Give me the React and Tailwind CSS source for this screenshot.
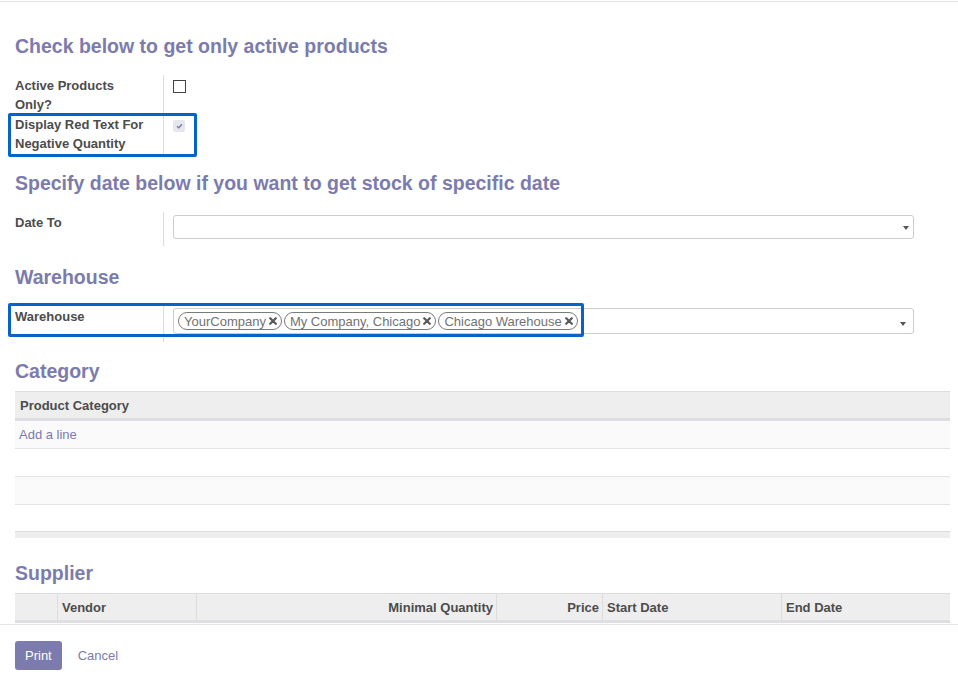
import React from "react";

function Caret({ className }) {
  return (
    <span
      className={
        "absolute w-0 h-0 border-x-[3px] border-t-[4px] border-x-transparent border-t-[#555] " +
        className
      }
    />
  );
}

function Tag({ label }) {
  return (
    <span className="inline-flex items-center h-[18px] pl-[5px] pr-[4px] gap-[3px] rounded-full border-[1.5px] border-[#7b7b7b] text-[#727272] leading-none whitespace-nowrap">
      {label}
      <svg width="8" height="8" viewBox="0 0 8 8">
        <path d="M1.2 1.2L6.8 6.8M6.8 1.2L1.2 6.8" stroke="#5a5a5a" strokeWidth="2.2" strokeLinecap="round" />
      </svg>
    </span>
  );
}

function Heading({ children, className }) {
  return (
    <h2 className={"text-[19.5px] leading-[22px] font-bold text-[#7c7bad] " + className}>
      {children}
    </h2>
  );
}

export default function App() {
  return (
    <div className="h-[683px] flex flex-col bg-white font-['Liberation_Sans',Arial,sans-serif] text-[13px] text-[#4c4c4c]">
      <div className="h-px" />
      <div className="h-px bg-[#e6e6e6]" />

      {/* scrolling body */}
      <div className="flex-1 overflow-hidden pl-[15px] pr-[8px]">
        <Heading className="mt-[33px]">Check below to get only active products</Heading>

        <div className="mt-[18px]">
          <div className="flex">
            <div className="w-[149px] border-r border-[#ddd] font-bold leading-[19px] pt-px">
              Active Products
              <br />
              Only?
            </div>
            <div className="pl-[9px] pt-[5px]">
              <div className="w-[13px] h-[13px] border border-[#444] bg-white" />
            </div>
          </div>
          <div className="flex relative">
            <div className="w-[149px] border-r border-[#ddd] font-bold leading-[19px] pt-px pb-[4px]">
              Display Red Text For
              <br />
              Negative Quantity
            </div>
            <div className="pl-[9px] pt-[6px]">
              <div className="w-[12px] h-[12px] rounded-[2px] bg-[#e6e6ee] flex items-center justify-center">
                <svg width="7" height="6" viewBox="0 0 7 6">
                  <path d="M1 3.2L2.8 4.8L6 1.2" fill="none" stroke="#7c7bad" strokeWidth="1.4" />
                </svg>
              </div>
            </div>
            <div className="absolute left-[-7px] top-[-1px] w-[189px] h-[44px] border-[3px] border-[#0563c9] rounded-[2px]" />
          </div>
        </div>

        <Heading className="mt-[15px]">Specify date below if you want to get stock of specific date</Heading>

        <div className="mt-[18px] flex">
          <div className="w-[149px] h-[34px] border-r border-[#ddd] font-bold leading-[19px] pt-px">Date To</div>
          <div className="flex-1 pl-[9px] pr-[36px] pt-[3px]">
            <div className="relative h-[24px] border border-[#ccc] rounded-[3px] bg-white">
              <Caret className="right-[4px] top-[10px]" />
            </div>
          </div>
        </div>

        <Heading className="mt-[20px]">Warehouse</Heading>

        <div className="mt-[18px] flex relative">
          <div className="w-[149px] h-[36px] border-r border-[#ddd] font-bold leading-[19px] pt-px">Warehouse</div>
          <div className="flex-1 pl-[9px] pr-[36px] pt-[2px]">
            <div className="relative h-[26px] border border-[#ccc] rounded-[3px] bg-white flex items-center gap-[2px] pl-[4px]">
              <Tag label="YourCompany" />
              <Tag label="My Company, Chicago" />
              <Tag label="Chicago Warehouse" />
              <Caret className="right-[7px] top-[13px]" />
            </div>
          </div>
          <div className="absolute left-[-7px] top-[-3px] w-[576px] h-[34px] border-[3px] border-[#0563c9] rounded-[2px]" />
        </div>

        <Heading className="mt-[18px]">Category</Heading>

        <div className="mt-[9px]">
          <div className="h-[30px] border-t border-[#ddd] bg-[#eeeeee] border-b-[3px] border-b-[#dcdee2] flex items-center px-[5px] pt-px font-bold">
            Product Category
          </div>
          <div className="h-[28px] bg-[#fafafa] border-b border-[#e3e3e6] flex items-center px-[4px] text-[#7c7bad]">
            Add a line
          </div>
          <div className="h-[28px] bg-white border-b border-[#e3e3e6]" />
          <div className="h-[28px] bg-[#fafafa] border-b border-[#e3e3e6]" />
          <div className="h-[26px] bg-white" />
          <div className="h-[7px] border-t border-[#ddd] bg-[#eeeeee]" />
        </div>

        <Heading className="mt-[24px]">Supplier</Heading>

        <div className="mt-[9px] grid grid-cols-[43px_139px_300px_106px_179px_1fr] h-[30px] border-t border-[#ddd] bg-[#eeeeee] border-b-[3px] border-b-[#dcdee2] font-bold">
          <div className="border-r border-[#ddd]" />
          <div className="border-r border-[#ddd] flex items-center px-[4px] pt-px">Vendor</div>
          <div className="border-r border-[#ddd] flex items-center justify-end px-[3px] pt-px">Minimal Quantity</div>
          <div className="border-r border-[#ddd] flex items-center justify-end px-[3px] pt-px">Price</div>
          <div className="border-r border-[#ddd] flex items-center px-[4px] pt-px">Start Date</div>
          <div className="flex items-center px-[4px] pt-px">End Date</div>
        </div>
      </div>

      {/* footer */}
      <div className="h-[59px] border-t border-[#e5e5e5] pl-[15px] pt-[16px] flex items-start">
        <button className="h-[29px] px-[10px] bg-[#7c7bad] text-white rounded-[3px]">Print</button>
        <button className="ml-[16px] h-[29px] text-[#7c7bad]">Cancel</button>
      </div>
    </div>
  );
}
